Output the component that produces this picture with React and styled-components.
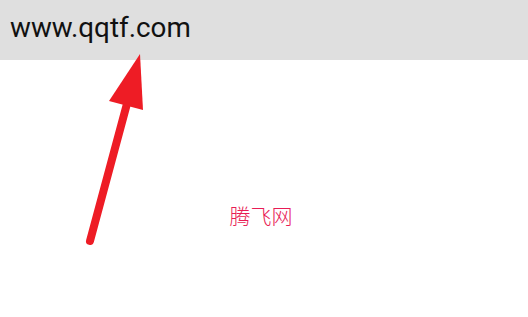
import React from 'react'
import styled, { createGlobalStyle } from 'styled-components'

const GlobalStyle = createGlobalStyle`
  html, body {
    margin: 0;
    padding: 0;
    background: #ffffff;
  }
  body {
    font-family: Roboto, "Noto Sans CJK SC", sans-serif;
  }
`;

const Page = styled.div`
  position: relative;
  width: 528px;
  height: 317px;
  overflow: hidden;
`;

const Header = styled.div`
  height: 60px;
  background: #dfdfdf;
  display: flex;
  align-items: center;
  padding: 0 10px;
  box-sizing: border-box;
`;

const Url = styled.div`
  font-size: 27.8px;
  color: #111;
  font-family: Roboto, sans-serif;
  line-height: 32px;
  margin-top: -4px;
`;

const Body = styled.div`
  display: flex;
  justify-content: center;
  padding-top: 143px;
  padding-right: 6px;
`;

const Brand = styled.div`
  font-size: 21px;
  font-weight: 300;
  color: #e81c55;
  font-family: "Noto Sans CJK SC", sans-serif;
  line-height: 24px;
`;

const Arrow = styled.svg`
  position: absolute;
  left: 0;
  top: 0;
  pointer-events: none;
`;

export default function App() {
  return (
    <>
      <GlobalStyle />
      <Page>
        <Header>
          <Url>www.qqtf.com</Url>
        </Header>
        <Body>
          <Brand>腾飞网</Brand>
        </Body>
        <Arrow width="528" height="317" viewBox="0 0 528 317">
          <line x1="90" y1="241" x2="128" y2="100" stroke="#ee1c25" strokeWidth="8" strokeLinecap="round" />
          <polygon points="140,54 109,101 143,110" fill="#ee1c25" />
        </Arrow>
      </Page>
    </>
  )
}
